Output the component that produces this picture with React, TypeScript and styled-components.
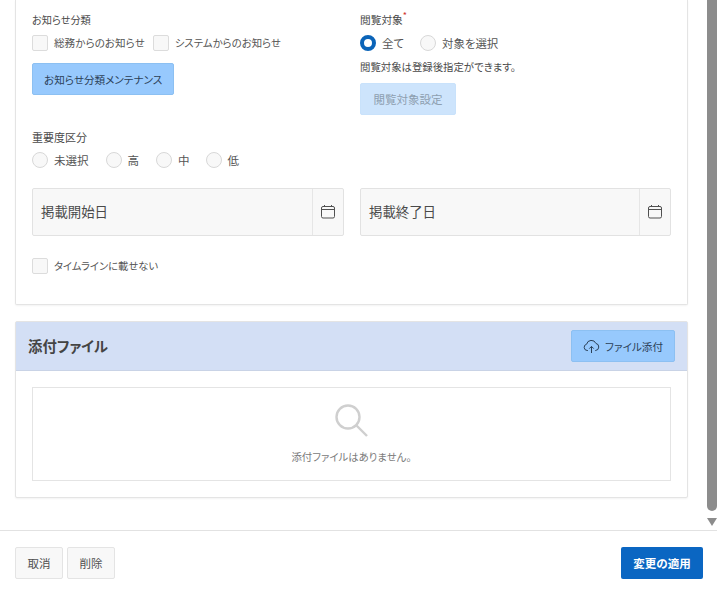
import React from "react";
import styled, { createGlobalStyle } from "styled-components";

const Global = createGlobalStyle`
  html, body { margin: 0; padding: 0; background: #fff; }
  body {
    font-family: "Noto Sans CJK JP", "Noto Sans", sans-serif;
    font-feature-settings: "palt";
    color: #404040;
    overflow: hidden;
  }
`;

const Page = styled.div`
  width: 717px;
  height: 592px;
  display: flex;
  flex-direction: column;
`;
const Body = styled.div`
  height: 530px;
  display: flex;
  border-bottom: 1px solid #e2e2e2;
  box-sizing: content-box;
`;
const Content = styled.div`
  flex: 1;
  padding: 0 19px 0 15px;
  display: flex;
  flex-direction: column;
  gap: 16px;
`;
const Scrollbar = styled.div`
  width: 10px;
  display: flex;
  flex-direction: column;
  align-items: center;
`;
const Thumb = styled.div`
  width: 10px;
  height: 511px;
  background: #8c8c8c;
  border-radius: 0 0 5px 5px;
`;
const ArrowDown = styled.div`
  margin-top: 7px;
  width: 0;
  height: 0;
  border-left: 5px solid transparent;
  border-right: 5px solid transparent;
  border-top: 8px solid #8c8c8c;
`;

const Card = styled.section<{ $open?: boolean }>`
  background: #fff;
  border: 1px solid #e4e4e4;
  border-top-width: ${(p) => (p.$open ? 0 : 1)}px;
  border-radius: ${(p) => (p.$open ? "0 0 2px 2px" : "2px")};
  box-shadow: 0 1px 2px rgba(0, 0, 0, 0.05);
`;
const FormArea = styled.div`
  height: 304px;
  box-sizing: border-box;
  padding: 12px 16px 0;
  display: flex;
  flex-direction: column;
`;
const TwoCols = styled.div`
  display: grid;
  grid-template-columns: 312px 311px;
  column-gap: 16px;
`;
const Column = styled.div`
  display: flex;
  flex-direction: column;
  align-items: flex-start;
`;
const Label = styled.div<{ $size?: number }>`
  font-size: ${(p) => p.$size ?? 11}px;
  line-height: 16px;
  color: #4a4a4a;
`;
const Required = styled.sup`
  color: #d0312d;
  font-size: 9px;
  line-height: 0;
`;
const Options = styled.div`
  margin-top: 7px;
  display: flex;
  align-items: center;
`;
const Option = styled.label<{ $gap?: number; $size?: number }>`
  display: flex;
  align-items: center;
  gap: 6px;
  font-size: ${(p) => p.$size ?? 10.6}px;
  line-height: 16px;
  color: #555;
  margin-right: ${(p) => p.$gap ?? 0}px;
`;
const CheckBox = styled.span`
  width: 16px;
  height: 16px;
  box-sizing: border-box;
  border: 1px solid #dcdcdc;
  border-radius: 2px;
  background: #f8f8f8;
`;
const Radio = styled.span<{ $on?: boolean }>`
  width: 16px;
  height: 16px;
  box-sizing: border-box;
  border-radius: 50%;
  border: ${(p) => (p.$on ? "4px solid #0b64b8" : "1px solid #d8d8d8")};
  background: ${(p) => (p.$on ? "#fff" : "#f8f8f8")};
`;
const Note = styled.div`
  margin-top: 8px;
  font-size: 10.4px;
  line-height: 16px;
  color: #4a4a4a;
`;
const BlueButton = styled.button<{ $off?: boolean; $top?: number }>`
  height: 32px;
  margin-top: ${(p) => p.$top ?? 0}px;
  padding: 0 ${(p) => (p.$off ? 12.5 : 11)}px;
  box-sizing: border-box;
  font: inherit;
  font-feature-settings: "palt";
  font-size: ${(p) => (p.$off ? 11.5 : 10.6)}px;
  display: flex;
  align-items: center;
  gap: 5px;
  border-radius: 2px;
  border: 1px solid ${(p) => (p.$off ? "#c9e2fb" : "#8cc0f2")};
  background: ${(p) => (p.$off ? "#cde4fc" : "#97c9fd")};
  color: ${(p) => (p.$off ? "#8e9fb0" : "#2b4057")};
`;
const Group = styled.div`
  margin-top: 14px;
`;
const DateRow = styled.div`
  margin-top: 20px;
  display: grid;
  grid-template-columns: 312px 311px;
  column-gap: 16px;
`;
const DateField = styled.div`
  height: 48px;
  box-sizing: border-box;
  display: flex;
  border: 1px solid #e2e2e2;
  border-radius: 2px;
  background: #f8f8f8;
`;
const DateLabel = styled.div`
  flex: 1;
  padding-left: 8px;
  font-size: 13.4px;
  line-height: 45px;
  color: #4a4a4a;
`;
const DateIcon = styled.div`
  width: 31px;
  box-sizing: border-box;
  padding-right: 1px;
  border-left: 1px solid #e6e6e6;
  display: flex;
  align-items: center;
  justify-content: center;
  color: #505050;
`;
const Timeline = styled.div`
  margin-top: 22px;
`;
const AttachHead = styled.header`
  height: 49px;
  box-sizing: border-box;
  padding: 0 12px;
  display: flex;
  align-items: center;
  justify-content: space-between;
  background: #d3dff5;
  border-bottom: 1px solid #c9d3e6;
`;
const AttachTitle = styled.h2`
  margin: 0 0 2px;
  font-size: 14.4px;
  font-weight: 700;
  color: #444;
`;
const AttachBody = styled.div`
  padding: 16px;
`;
const Empty = styled.div`
  height: 94px;
  box-sizing: border-box;
  border: 1px solid #e4e4e4;
  display: flex;
  flex-direction: column;
  align-items: center;
  padding-top: 15px;
  color: #7a7a7a;
  font-size: 10.4px;
`;
const EmptyText = styled.div`
  margin-top: 10px;
  line-height: 16px;
`;
const Footer = styled.footer`
  flex: 1;
  padding: 16px 14px 0 15px;
  display: flex;
  align-items: flex-start;
  gap: 4px;
`;
const GrayButton = styled.button`
  width: 48px;
  height: 32px;
  padding: 0;
  font: inherit;
  font-feature-settings: "palt";
  font-size: 11.5px;
  color: #505050;
  background: #f8f8f8;
  border: 1px solid #e4e4e4;
  border-radius: 2px;
`;
const ApplyButton = styled.button`
  margin-left: auto;
  width: 82px;
  height: 32px;
  padding: 0;
  font: inherit;
  font-feature-settings: "palt";
  font-size: 11.5px;
  font-weight: 700;
  color: #fff;
  background: #0a66c2;
  border: none;
  border-radius: 2px;
`;

const CalendarIcon = () => (
  <svg width="16" height="16" viewBox="0 0 16 16" fill="none" stroke="currentColor" strokeWidth="1">
    <rect x="1.5" y="2.5" width="13" height="11.5" rx="1.5" />
    <path d="M1.5 5.5h13M4.5 1v2M11.5 1v2" />
  </svg>
);

const UploadIcon = () => (
  <svg width="17" height="16" viewBox="0 0 17 16" fill="none" stroke="#2b4057" strokeWidth="1">
    <path d="M5 12.5H4.2A3.2 3.2 0 0 1 3.6 6.2 4.9 4.9 0 0 1 12.9 5.4 3.6 3.6 0 0 1 12.6 12.5H12" />
    <path d="M8.5 15V8.5M6.3 10.6L8.5 8.4l2.2 2.2" />
  </svg>
);

const SearchIcon = () => (
  <svg width="36" height="36" viewBox="0 0 36 36" fill="none" stroke="#cfcfcf" strokeWidth="2.4">
    <circle cx="14" cy="14" r="11.5" />
    <path d="M22.5 22.5L33 33" />
  </svg>
);

const App: React.FC = () => {
  return (
    <Page>
      <Global />
      <Body>
        <Content>
          <Card $open>
            <FormArea>
              <TwoCols>
                <Column>
                  <Label $size={10.2}>お知らせ分類</Label>
                  <Options>
                    <Option $gap={8}>
                      <CheckBox />
                      総務からのお知らせ
                    </Option>
                    <Option $size={10.4}>
                      <CheckBox />
                      システムからのお知らせ
                    </Option>
                  </Options>
                  <BlueButton $top={12}>お知らせ分類メンテナンス</BlueButton>
                </Column>
                <Column>
                  <Label $size={10.7}>
                    閲覧対象<Required>*</Required>
                  </Label>
                  <Options>
                    <Option $gap={16} $size={11.5}>
                      <Radio $on />
                      全て
                    </Option>
                    <Option $size={11.4}>
                      <Radio />
                      対象を選択
                    </Option>
                  </Options>
                  <Note>閲覧対象は登録後指定ができます。</Note>
                  <BlueButton $off $top={8}>
                    閲覧対象設定
                  </BlueButton>
                </Column>
              </TwoCols>
              <Group>
                <Label>重要度区分</Label>
                <Options>
                  <Option $gap={17} $size={11.5}>
                    <Radio />
                    未選択
                  </Option>
                  <Option $gap={17} $size={11.5}>
                    <Radio />高
                  </Option>
                  <Option $gap={16} $size={11.5}>
                    <Radio />中
                  </Option>
                  <Option $size={11.5}>
                    <Radio />低
                  </Option>
                </Options>
              </Group>
              <DateRow>
                <DateField>
                  <DateLabel>掲載開始日</DateLabel>
                  <DateIcon>
                    <CalendarIcon />
                  </DateIcon>
                </DateField>
                <DateField>
                  <DateLabel>掲載終了日</DateLabel>
                  <DateIcon>
                    <CalendarIcon />
                  </DateIcon>
                </DateField>
              </DateRow>
              <Timeline>
                <Option $size={10.3}>
                  <CheckBox />
                  タイムラインに載せない
                </Option>
              </Timeline>
            </FormArea>
          </Card>
          <Card>
            <AttachHead>
              <AttachTitle>添付ファイル</AttachTitle>
              <BlueButton>
                <UploadIcon />
                ファイル添付
              </BlueButton>
            </AttachHead>
            <AttachBody>
              <Empty>
                <SearchIcon />
                <EmptyText>添付ファイルはありません。</EmptyText>
              </Empty>
            </AttachBody>
          </Card>
        </Content>
        <Scrollbar>
          <Thumb />
          <ArrowDown />
        </Scrollbar>
      </Body>
      <Footer>
        <GrayButton>取消</GrayButton>
        <GrayButton>削除</GrayButton>
        <ApplyButton>変更の適用</ApplyButton>
      </Footer>
    </Page>
  );
};

export default App;
